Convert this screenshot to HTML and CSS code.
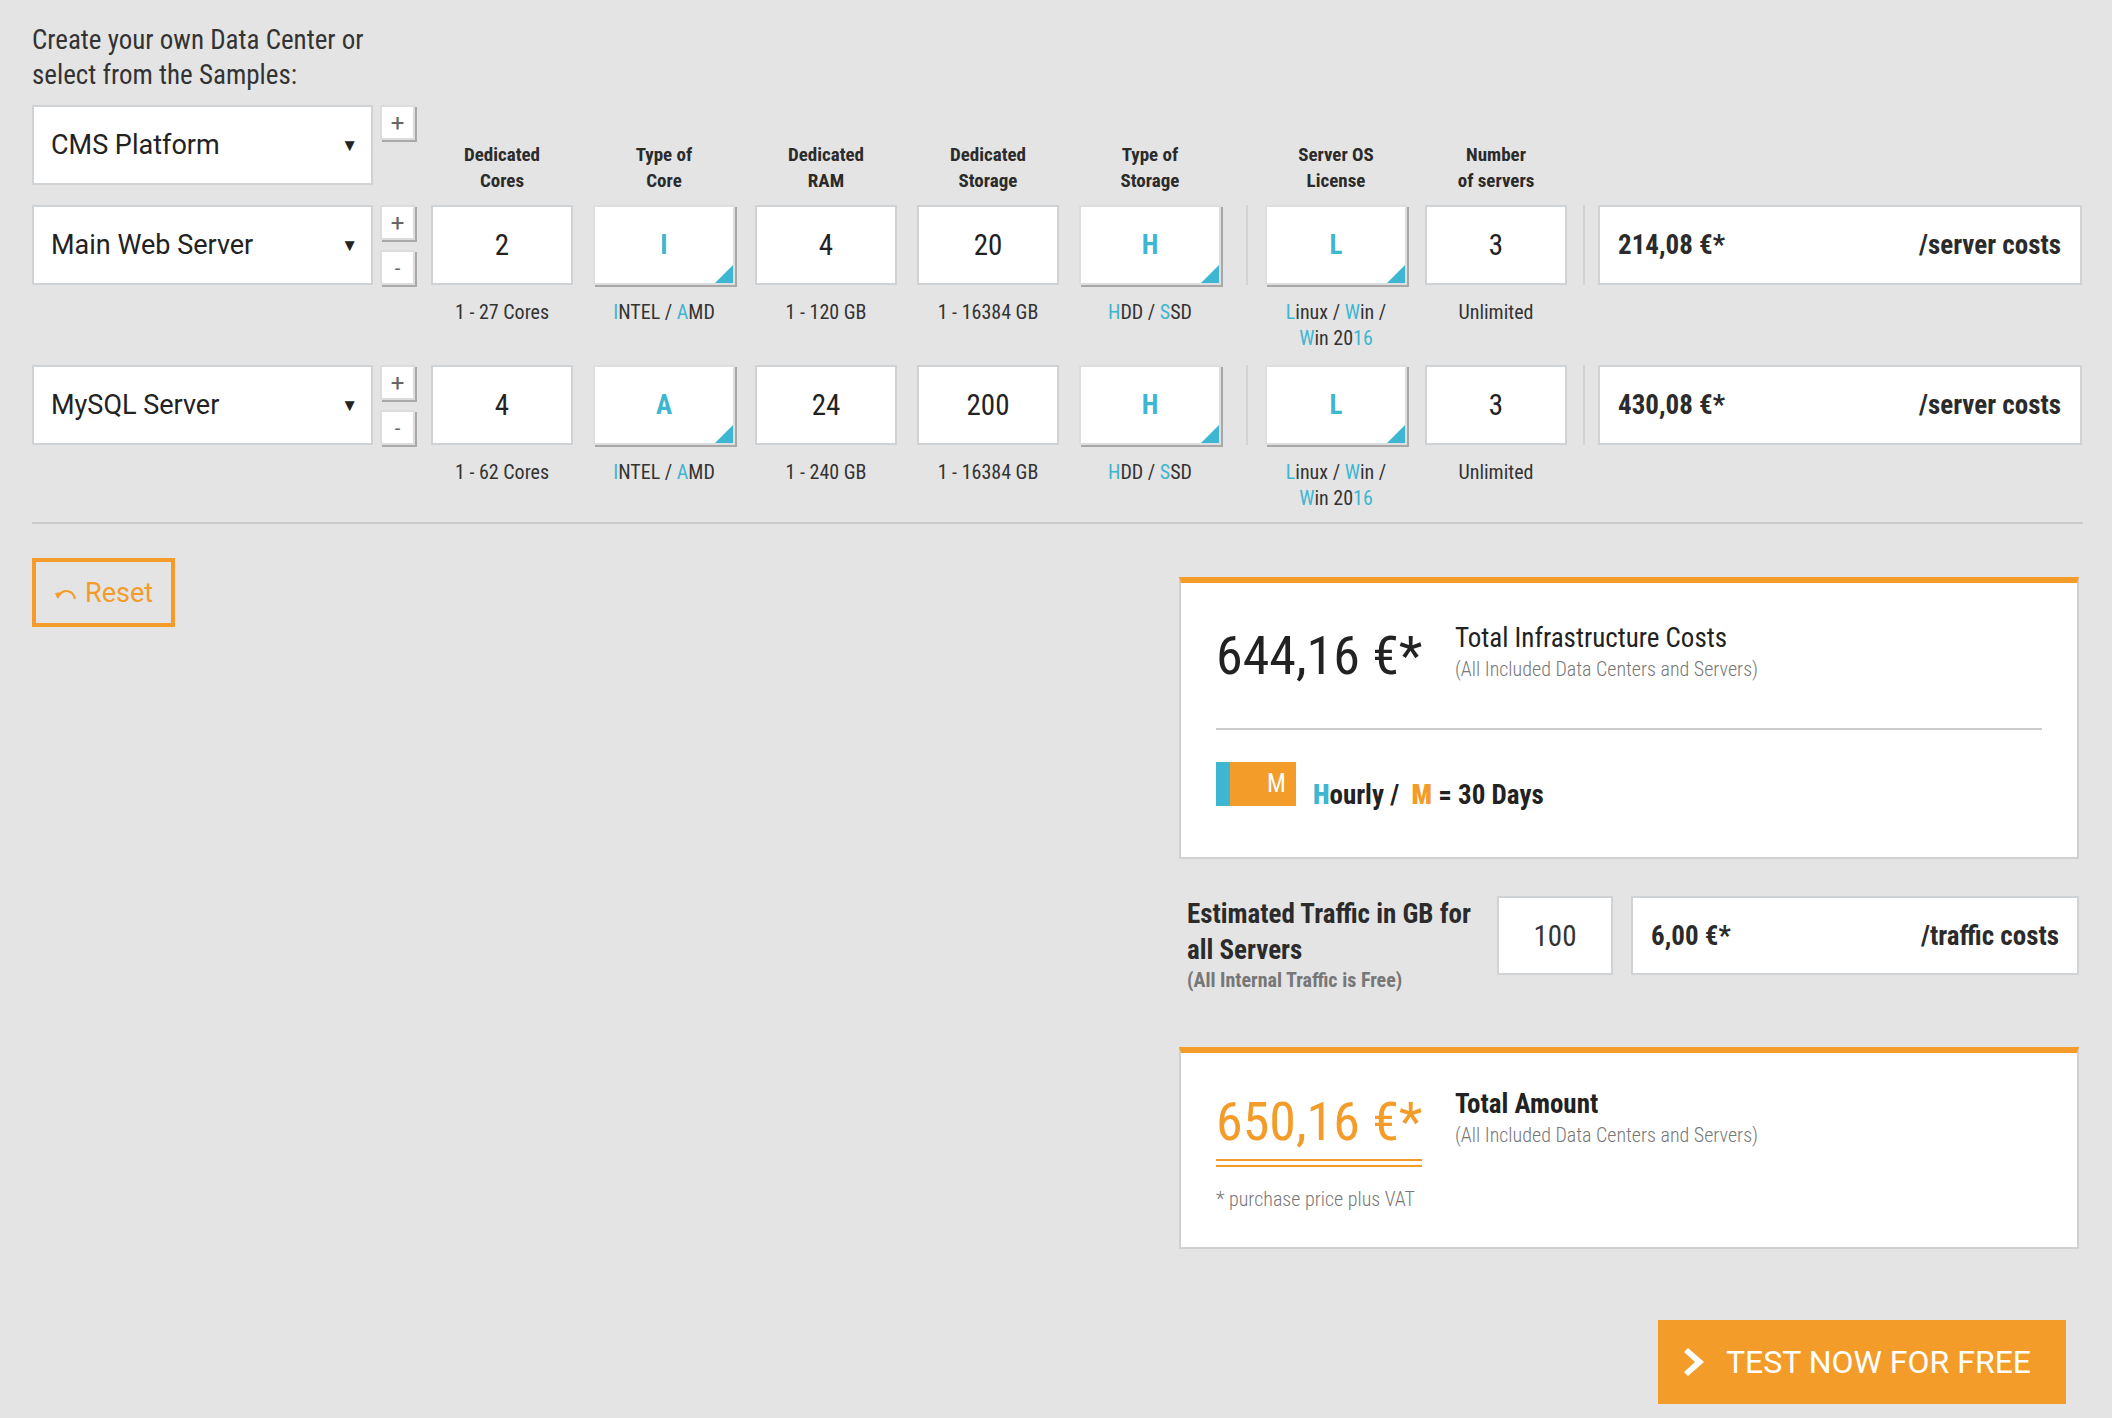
FILE: index.html
```html
<!DOCTYPE html>
<html lang="en">
<head>
<meta charset="utf-8">
<title>Data Center Configurator</title>
<link rel="stylesheet" href="styles.css">
</head>
<body>
<div class="page">
  <div class="intro">Create your own Data Center or<br>select from the Samples:</div>

  <div class="config">
    <div class="row head-row">
      <div class="select"><span>CMS Platform</span><span class="caret">&#9660;</span></div>
      <div class="pm"><div class="pm-btn">+</div></div>
      <div class="cell"><div class="colhead">Dedicated<br>Cores</div></div>
      <div class="cell"><div class="colhead">Type of<br>Core</div></div>
      <div class="cell"><div class="colhead">Dedicated<br>RAM</div></div>
      <div class="cell"><div class="colhead">Dedicated<br>Storage</div></div>
      <div class="cell"><div class="colhead">Type of<br>Storage</div></div>
      <div class="sep sep-a blank"></div>
      <div class="cell cell-os"><div class="colhead">Server OS<br>License</div></div>
      <div class="cell cell-num"><div class="colhead">Number<br>of servers</div></div>
    </div>

    <div class="row server">
      <div class="select"><span>Main Web Server</span><span class="caret">&#9660;</span></div>
      <div class="pm"><div class="pm-btn">+</div><div class="pm-btn minus">-</div></div>
      <div class="cell"><div class="box">2</div><div class="hint">1 - 27 Cores</div></div>
      <div class="cell"><div class="box choice">I</div><div class="hint"><b>I</b>NTEL / <b>A</b>MD</div></div>
      <div class="cell"><div class="box">4</div><div class="hint">1 - 120 GB</div></div>
      <div class="cell"><div class="box">20</div><div class="hint">1 - 16384 GB</div></div>
      <div class="cell"><div class="box choice">H</div><div class="hint"><b>H</b>DD / <b>S</b>SD</div></div>
      <div class="sep sep-a"></div>
      <div class="cell cell-os"><div class="box choice">L</div><div class="hint"><b>L</b>inux / <b>W</b>in /<br><b>W</b>in 20<b>16</b></div></div>
      <div class="cell cell-num"><div class="box">3</div><div class="hint">Unlimited</div></div>
      <div class="sep sep-b"></div>
      <div class="cost"><span>214,08 €*</span><span>/server costs</span></div>
    </div>

    <div class="row server">
      <div class="select"><span>MySQL Server</span><span class="caret">&#9660;</span></div>
      <div class="pm"><div class="pm-btn">+</div><div class="pm-btn minus">-</div></div>
      <div class="cell"><div class="box">4</div><div class="hint">1 - 62 Cores</div></div>
      <div class="cell"><div class="box choice">A</div><div class="hint"><b>I</b>NTEL / <b>A</b>MD</div></div>
      <div class="cell"><div class="box">24</div><div class="hint">1 - 240 GB</div></div>
      <div class="cell"><div class="box">200</div><div class="hint">1 - 16384 GB</div></div>
      <div class="cell"><div class="box choice">H</div><div class="hint"><b>H</b>DD / <b>S</b>SD</div></div>
      <div class="sep sep-a"></div>
      <div class="cell cell-os"><div class="box choice">L</div><div class="hint"><b>L</b>inux / <b>W</b>in /<br><b>W</b>in 20<b>16</b></div></div>
      <div class="cell cell-num"><div class="box">3</div><div class="hint">Unlimited</div></div>
      <div class="sep sep-b"></div>
      <div class="cost"><span>430,08 €*</span><span>/server costs</span></div>
    </div>
  </div>

  <div class="divider"></div>

  <div class="lower">
    <div class="reset">
      <svg class="reset-icon" width="22" height="14" viewBox="0 0 22 14" aria-hidden="true">
        <path d="M21 12 C 19 3, 10 2, 6 7" fill="none" stroke="#f39c2a" stroke-width="2"/>
        <path d="M1 6 L 9 5 L 3.5 12 Z" fill="#f39c2a"/>
      </svg>
      <span>Reset</span>
    </div>

    <div class="summary">
      <div class="panel infra">
        <div class="panel-top">
          <div class="big">644,16 €*</div>
          <div class="panel-text">
            <div class="title">Total Infrastructure Costs</div>
            <div class="sub">(All Included Data Centers and Servers)</div>
          </div>
        </div>
        <div class="panel-hr"></div>
        <div class="period">
          <div class="toggle"><span class="t-h"></span><span class="t-m">M</span></div>
          <div class="period-text"><b class="blue">H</b>ourly / &nbsp;<b class="orange">M</b> = 30 Days</div>
        </div>
      </div>

      <div class="traffic">
        <div class="traffic-label">
          <div class="traffic-title">Estimated Traffic in GB for all Servers</div>
          <div class="traffic-sub">(All Internal Traffic is Free)</div>
        </div>
        <div class="traffic-input">100</div>
        <div class="cost traffic-cost"><span>6,00 €*</span><span>/traffic costs</span></div>
      </div>

      <div class="panel total">
        <div class="panel-top">
          <div class="big-wrap">
            <div class="big orange-text">650,16 €*</div>
            <div class="double-line"></div>
          </div>
          <div class="panel-text">
            <div class="title bold">Total Amount</div>
            <div class="sub">(All Included Data Centers and Servers)</div>
          </div>
        </div>
        <div class="vat">* purchase price plus VAT</div>
      </div>

      <div class="cta-row">
        <div class="cta">
          <svg class="cta-icon" width="20" height="28" viewBox="0 0 20 28" aria-hidden="true">
            <path d="M0 4 L4 0 L20 14 L4 28 L0 24 L11 14 Z" fill="#fff"/>
          </svg>
          <span>TEST NOW FOR FREE</span>
        </div>
      </div>
    </div>
  </div>
</div>
</body>
</html>
```

FILE: styles.css
```css
* { box-sizing: border-box; }

html, body {
  margin: 0;
  padding: 0;
  background: #e4e4e4;
}

body {
  font-family: "Roboto Condensed", "Liberation Sans Narrow", Roboto, "Liberation Sans", sans-serif;
  color: #2b2b2b;
}

.page {
  width: 2112px;
  min-height: 1418px;
  padding: 23px 29px 0 32px;
}

.intro {
  font-size: 27px;
  line-height: 35px;
  color: #333;
  width: 420px;
}

.config {
  margin-top: 12px;
}

.row {
  display: flex;
  align-items: flex-start;
}

.head-row {
  height: 89px;
  margin-bottom: 11px;
}

.server + .server {
  margin-top: 14px;
}

.select {
  width: 341px;
  height: 80px;
  background: #fff;
  border: 2px solid #cfd3d5;
  display: flex;
  align-items: center;
  justify-content: space-between;
  padding: 0 13px 0 17px;
  font-family: Roboto, "Liberation Sans", sans-serif;
  font-size: 27px;
  color: #222;
}

.caret {
  font-size: 17px;
  color: #222;
}

.pm {
  width: 35px;
  margin-left: 7px;
  display: flex;
  flex-direction: column;
  gap: 10px;
}

.pm-btn {
  width: 35px;
  height: 35px;
  background: #fff;
  border: 2px solid #dcdcdc;
  box-shadow: 2px 2px 0 #a9a9a9;
  display: flex;
  align-items: center;
  justify-content: center;
  font-family: Roboto, "Liberation Sans", sans-serif;
  font-size: 24px;
  color: #666;
  line-height: 1;
}

.pm-btn.minus {
  font-size: 20px;
}

.cell {
  width: 142px;
  margin-left: 20px;
}

.pm + .cell {
  margin-left: 16px;
}

.colhead {
  padding-top: 37px;
  font-weight: 700;
  font-size: 19px;
  line-height: 26px;
  text-align: center;
  color: #2b2b2b;
}

.box {
  position: relative;
  height: 80px;
  background: #fff;
  border: 2px solid #cfd3d5;
  display: flex;
  align-items: center;
  justify-content: center;
  font-size: 29px;
  font-weight: 400;
  color: #222;
}

.box.choice {
  border-color: #dedede;
  box-shadow: 2px 2px 0 #a8a8a8;
  color: #3db6d1;
  font-weight: 700;
  font-size: 27px;
}

.box.choice::after {
  content: "";
  position: absolute;
  right: 0;
  bottom: 0;
  width: 0;
  height: 0;
  border-left: 18px solid transparent;
  border-bottom: 18px solid #3db6d1;
}

.hint {
  margin-top: 14px;
  font-size: 20px;
  line-height: 26px;
  text-align: center;
  color: #333;
}

.hint b {
  font-weight: 400;
  color: #3db6d1;
}

.sep {
  width: 2px;
  height: 80px;
  background: #d3d3d3;
}

.sep-a { margin-left: 25px; }
.sep-a.blank { background: transparent; }
.cell-os { margin-left: 17px; }
.cell-num { margin-left: 18px; }
.sep-b { margin-left: 16px; }

.cost {
  width: 484px;
  height: 80px;
  margin-left: 13px;
  background: #fff;
  border: 2px solid #cfd3d5;
  display: flex;
  align-items: center;
  justify-content: space-between;
  padding: 0 19px 0 18px;
  font-weight: 700;
  font-size: 27px;
  color: #2b2b2b;
}

.divider {
  margin-top: 11px;
  height: 2px;
  background: #cbcbcb;
}

.lower {
  display: flex;
  justify-content: space-between;
  align-items: flex-start;
  margin-top: 34px;
}

.reset {
  width: 143px;
  height: 69px;
  border: 4px solid #f39c2a;
  display: flex;
  align-items: center;
  padding-left: 18px;
  gap: 9px;
  color: #f39c2a;
  font-family: Roboto, "Liberation Sans", sans-serif;
  font-size: 27px;
}

.reset-icon { margin-top: 3px; }

.summary {
  width: 900px;
  margin-right: 4px;
  padding-top: 19px;
}

.panel {
  background: #fff;
  border: 2px solid #d0d0d0;
  border-top: 6px solid #f39c2a;
  padding: 0 35px;
}

.infra {
  padding-top: 43px;
  padding-bottom: 51px;
}

.panel-top {
  display: flex;
  align-items: flex-start;
}

.big {
  font-size: 54px;
  font-weight: 400;
  line-height: 60px;
  color: #222;
  white-space: nowrap;
  width: 239px;
}

.big-wrap {
  width: 239px;
}

.big-wrap .big {
  display: inline-block;
  width: auto;
}

.orange-text { color: #f39c2a; }

.double-line {
  width: 206px;
  height: 8px;
  margin-top: 7px;
  border-top: 2px solid #f39c2a;
  border-bottom: 2px solid #f39c2a;
}

.panel-text {
  margin-top: -3px;
}

.title {
  font-size: 27px;
  line-height: 30px;
  color: #222;
}

.title.bold {
  font-weight: 700;
}

.sub {
  margin-top: 4px;
  font-size: 20px;
  font-weight: 300;
  line-height: 24px;
  color: #777;
}

.panel-hr {
  margin-top: 42px;
  height: 2px;
  background: #cccccc;
}

.period {
  margin-top: 32px;
  display: flex;
  align-items: flex-end;
  gap: 17px;
}

.toggle {
  width: 80px;
  height: 44px;
  display: flex;
}

.t-h {
  width: 14px;
  background: #3db6d1;
}

.t-m {
  flex: 1;
  background: #f39c2a;
  color: #fff;
  font-size: 25px;
  font-weight: 400;
  line-height: 1;
  text-align: right;
  padding: 9px 10px 0 0;
}

.period-text {
  font-weight: 700;
  font-size: 27px;
  line-height: 22px;
  color: #222;
}

.blue { color: #3db6d1; }
.orange { color: #f39c2a; }

.traffic {
  margin-top: 37px;
  display: flex;
  align-items: flex-start;
  padding-left: 8px;
}

.traffic-label {
  width: 300px;
}

.traffic-title {
  font-weight: 700;
  font-size: 27px;
  line-height: 36px;
  color: #2b2b2b;
}

.traffic-sub {
  font-weight: 700;
  font-size: 20px;
  line-height: 24px;
  color: #777;
}

.traffic-input {
  width: 116px;
  height: 79px;
  margin-left: 10px;
  background: #fff;
  border: 2px solid #cfd3d5;
  display: flex;
  align-items: center;
  justify-content: center;
  font-size: 29px;
  font-weight: 400;
  color: #333;
}

.traffic-cost {
  width: 448px;
  height: 79px;
  margin-left: 18px;
  padding: 0 18px 0 18px;
}

.total {
  margin-top: 55px;
  padding-top: 39px;
  padding-bottom: 36px;
}

.vat {
  margin-top: 20px;
  font-size: 20px;
  font-weight: 300;
  line-height: 24px;
  color: #777;
}

.cta-row {
  display: flex;
  justify-content: flex-end;
  margin-top: 71px;
}

.cta {
  width: 408px;
  height: 84px;
  margin-right: 13px;
  background: #f39c2a;
  display: flex;
  align-items: center;
  padding-left: 26px;
  gap: 22px;
  color: #fff;
  font-family: Roboto, "Liberation Sans", sans-serif;
  font-size: 32px;
}
```
